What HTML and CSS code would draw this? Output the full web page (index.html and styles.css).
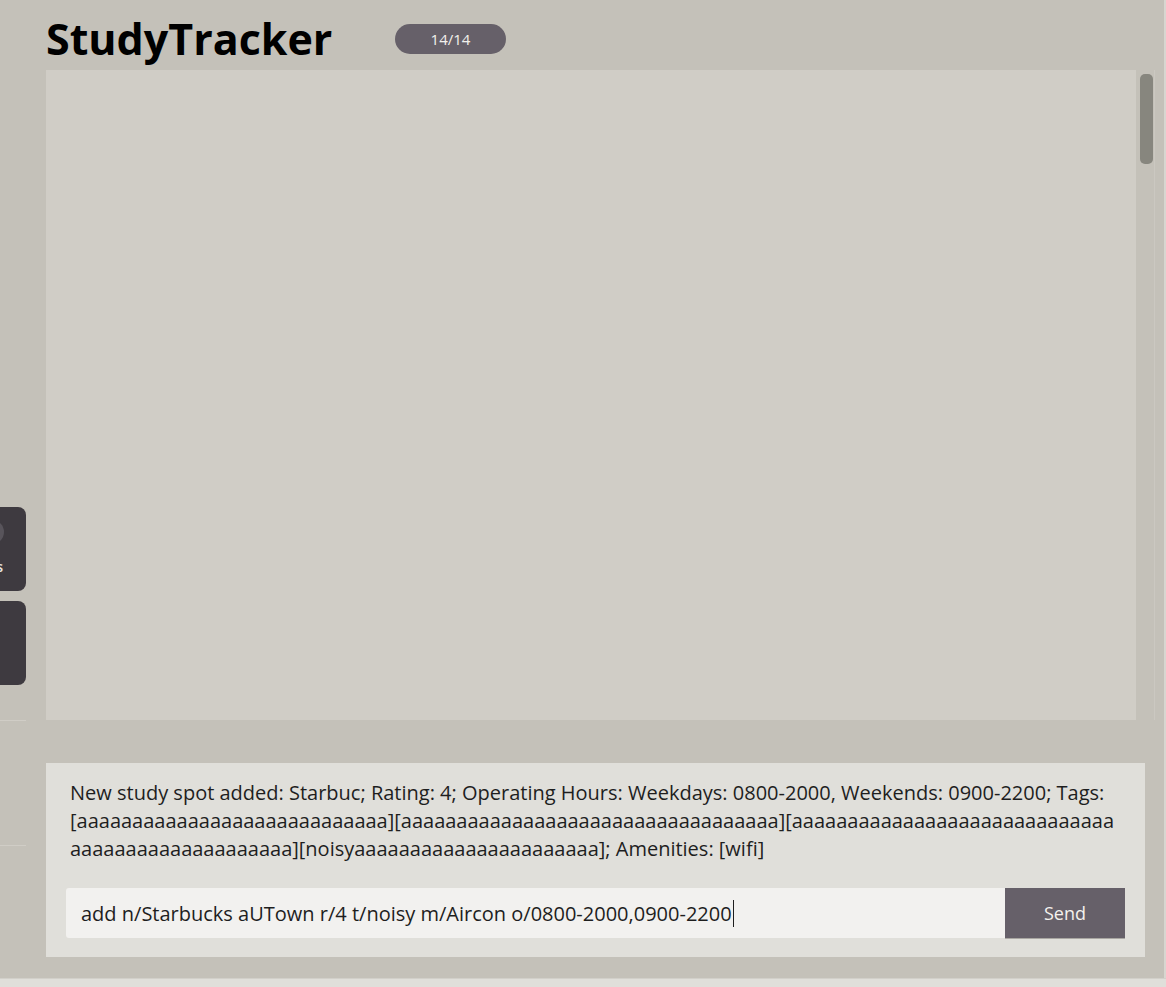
FILE: index.html
```html
<!DOCTYPE html>
<html>
<head>
<meta charset="utf-8">
<link rel="stylesheet" href="styles.css">
</head>
<body>
<div class="app">
  <div class="top">
    <aside class="sidebar">
      <div class="card">
        <div class="card-inner">
          <span class="avatar"></span>
          <span class="card-label">Tags</span>
        </div>
      </div>
      <div class="card card-empty"></div>
      <div class="rule rule-first"></div>
      <div class="rule rule-second"></div>
    </aside>
    <main class="main">
      <header class="header">
        <h1 class="title">StudyTracker</h1>
        <span class="badge">14/14</span>
      </header>
      <section class="list-row">
        <div class="list-panel"></div>
        <div class="scroll-track"><div class="scroll-thumb"></div></div>
      </section>
      <section class="result-box">
        <p class="result-text">New study spot added: Starbuc; Rating: 4; Operating Hours: Weekdays: 0800-2000, Weekends: 0900-2200; Tags: [aaaaaaaaaaaaaaaaaaaaaaaaaaaa][aaaaaaaaaaaaaaaaaaaaaaaaaaaaaaaaaa][aaaaaaaaaaaaaaaaaaaaaaaaaaaaaaaaaaaaaaaaaaaaaaaaa][noisyaaaaaaaaaaaaaaaaaaaaaa]; Amenities: [wifi]</p>
        <div class="command-row">
          <div class="command-input"><span class="command-text">add n/Starbucks aUTown r/4 t/noisy m/Aircon o/0800-2000,0900-2200</span><span class="caret"></span></div>
          <button class="send-btn">Send</button>
        </div>
      </section>
    </main>
    <div class="edge"></div>
  </div>
  <div class="status-bar"></div>
</div>
</body>
</html>
```
FILE: styles.css
```css
* { box-sizing: border-box; }
html, body {
  margin: 0;
  padding: 0;
  background: #c4c1b9;
  font-family: "Open Sans", "Liberation Sans", sans-serif;
  color: #1e1e1e;
}
.app {
  width: 1166px;
  height: 987px;
  display: flex;
  flex-direction: column;
  overflow: hidden;
}
.top {
  height: 978px;
  display: flex;
}
.sidebar {
  width: 26px;
  flex-shrink: 0;
  padding-top: 507px;
  display: flex;
  flex-direction: column;
}
.card {
  width: 26px;
  height: 84px;
  background: #3e3a40;
  border-radius: 0 8px 8px 0;
  overflow: hidden;
  display: flex;
  justify-content: flex-end;
}
.card-empty { margin-top: 10px; }
.card-inner {
  width: 70px;
  flex-shrink: 0;
  display: flex;
  flex-direction: column;
  align-items: flex-end;
  padding: 13px 23px 0 0;
}
.avatar {
  width: 24px;
  height: 24px;
  border-radius: 50%;
  background: #58545b;
  margin-right: -1px;
}
.card-label {
  margin-top: 14px;
  font-size: 14px;
  font-weight: 600;
  color: #e8e6e1;
  line-height: 18px;
}
.rule {
  height: 1px;
  background: #d0cdc6;
  width: 26px;
}
.rule-first { margin-top: 35px; }
.rule-second { margin-top: 124px; }
.main {
  flex: 1;
  margin-left: 20px;
  display: flex;
  flex-direction: column;
}
.header {
  height: 70px;
  padding-top: 8px;
  display: flex;
  align-items: center;
}
.title {
  margin: 0;
  font-size: 43px;
  font-weight: 700;
  color: #000;
  line-height: 54px;
  width: 349px;
}
.badge {
  width: 111px;
  height: 30px;
  border-radius: 15px;
  background: #666069;
  color: #f2f0ec;
  font-size: 15px;
  display: flex;
  align-items: center;
  justify-content: center;
}
.list-row {
  height: 650px;
  display: flex;
}
.list-panel {
  width: 1090px;
  background: #d0cdc6;
}
.scroll-track {
  width: 19px;
  padding: 4px 0 0 4px;
  border-right: 1px solid #cbc8c1;
}
.scroll-thumb {
  width: 13px;
  height: 90px;
  border-radius: 5px;
  background: #87867e;
}
.result-box {
  margin-top: 43px;
  width: 1099px;
  height: 194px;
  background: #e0dfda;
  padding: 16px 20px 0 20px;
}
.result-text {
  margin: 0 4px;
  font-size: 20px;
  line-height: 28px;
  color: #1e1e1e;
  word-break: break-all;
}
.command-row {
  margin-top: 25px;
  display: flex;
  height: 51px;
}
.command-input {
  flex: 1;
  height: 50px;
  background: #f2f1ef;
  border-radius: 3px 0 0 3px;
  display: flex;
  align-items: center;
  padding-left: 15px;
  font-size: 20px;
  color: #1e1e1e;
}
.caret {
  width: 1px;
  height: 27px;
  background: #1e1e1e;
  margin-left: 1px;
}
.send-btn {
  width: 120px;
  height: 51px;
  border: none;
  background: #666069;
  color: #f4f2ee;
  font-family: "Open Sans", "Liberation Sans", sans-serif;
  font-size: 18px;
  padding: 0;
  border-bottom: 1px solid #a9a7a2;
}
.edge {
  width: 2px;
  background: #d8d6d0;
  margin-left: auto;
}
.status-bar {
  height: 9px;
  background: #e0dfda;
  border-top: 1px solid #d2d0ca;
}
```
